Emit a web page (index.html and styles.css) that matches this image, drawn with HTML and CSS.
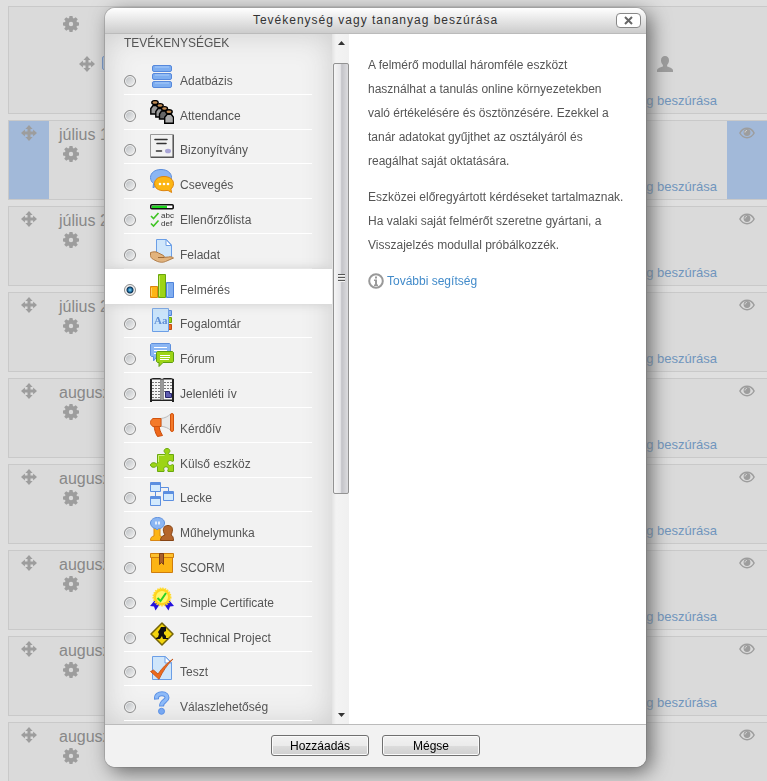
FILE: index.html
```html
<!DOCTYPE html>
<html lang="hu">

<head>
    <meta charset="UTF-8">
    <meta name="viewport" content="width=device-width, initial-scale=1.0">
    <title>Tevékenység vagy tananyag beszúrása</title>
    <link rel="stylesheet" href="styles.css">
</head>

<body>
    <!-- shared icons of the course page -->
    <svg class="sprite" aria-hidden="true">
        <symbol id="move" viewBox="0 0 16 16">
            <path d="M8 0l3.600 3.900H9.500v2.600h2.600V4.400L16 8l-3.900 3.600V9.500H9.500v2.600h2.100L8 16l-3.600-3.900h2.100V9.500H3.900v2.100L0 8l3.900-3.600v2.100h2.600V3.900H4.400z" />
        </symbol>
        <symbol id="gear" viewBox="0 0 16 16">
            <path fill-rule="evenodd" d="M6.500 0h3l.4 2.100 1 .4L12.700 1.200l2.100 2.100-1.300 1.800.4 1 2.100.4v3l-2.100.4-.4 1 1.300 1.800-2.100 2.100-1.800-1.300-1 .4-.4 2.100h-3l-.4-2.100-1-.4-1.800 1.300-2.100-2.100 1.300-1.800-.4-1L0 9.500v-3l2.100-.4.4-1-1.300-1.800 2.100-2.100 1.800 1.300 1-.4zM8 5.800a2.200 2.200 0 1 0 0 4.400 2.200 2.200 0 0 0 0-4.400z" />
        </symbol>
        <symbol id="eye" viewBox="0 0 16 16">
            <path fill="none" stroke="#9d9d9d" stroke-width="1.500" d="M.9 8C2.500 5 5 3.300 8 3.300S13.500 5 15.100 8C13.500 11 11 12.700 8 12.700S2.500 11 .9 8z" />
            <circle cx="8" cy="7.500" r="3.400" />
            <path fill="none" stroke="#dadada" d="M6 7.500c0-1.200.8-2 2-2" />
        </symbol>
        <symbol id="user" viewBox="0 0 16 16">
            <path d="M8 0c2.500 0 4 1.700 4 4.300 0 2-.8 3.600-1.900 4.600v1.500c2.500 1 5.900 1.700 5.900 4V16H0v-1.600c0-2.300 3.400-3 5.900-4V8.900C4.800 7.900 4 6.300 4 4.300 4 1.700 5.500 0 8 0z" />
        </symbol>
    </svg>

    <ul class="course">
        <li class="section intro">
            <div class="side"></div>
            <div class="content">
                <svg class="icon gear"><use href="#gear" /></svg>
                <div class="mod">
                    <svg class="icon"><use href="#move" /></svg>
                    <span class="mod-icon"></span>
                    <svg class="icon user"><use href="#user" /></svg>
                </div>
                <a class="add" href="#">Tevékenység vagy tananyag beszúrása</a>
            </div>
            <div class="side"></div>
        </li>
        <li class="section current">
            <div class="side"><svg class="icon"><use href="#move" /></svg></div>
            <div class="content">
                <h3>július 15</h3>
                <svg class="icon gear"><use href="#gear" /></svg>
                <a class="add" href="#">Tevékenység vagy tananyag beszúrása</a>
            </div>
            <div class="side"><svg class="icon"><use href="#eye" /></svg></div>
        </li>
        <li class="section">
            <div class="side"><svg class="icon"><use href="#move" /></svg></div>
            <div class="content">
                <h3>július 22</h3>
                <svg class="icon gear"><use href="#gear" /></svg>
                <a class="add" href="#">Tevékenység vagy tananyag beszúrása</a>
            </div>
            <div class="side"><svg class="icon"><use href="#eye" /></svg></div>
        </li>
        <li class="section">
            <div class="side"><svg class="icon"><use href="#move" /></svg></div>
            <div class="content">
                <h3>július 29</h3>
                <svg class="icon gear"><use href="#gear" /></svg>
                <a class="add" href="#">Tevékenység vagy tananyag beszúrása</a>
            </div>
            <div class="side"><svg class="icon"><use href="#eye" /></svg></div>
        </li>
        <li class="section">
            <div class="side"><svg class="icon"><use href="#move" /></svg></div>
            <div class="content">
                <h3>augusztus 5</h3>
                <svg class="icon gear"><use href="#gear" /></svg>
                <a class="add" href="#">Tevékenység vagy tananyag beszúrása</a>
            </div>
            <div class="side"><svg class="icon"><use href="#eye" /></svg></div>
        </li>
        <li class="section">
            <div class="side"><svg class="icon"><use href="#move" /></svg></div>
            <div class="content">
                <h3>augusztus 12</h3>
                <svg class="icon gear"><use href="#gear" /></svg>
                <a class="add" href="#">Tevékenység vagy tananyag beszúrása</a>
            </div>
            <div class="side"><svg class="icon"><use href="#eye" /></svg></div>
        </li>
        <li class="section">
            <div class="side"><svg class="icon"><use href="#move" /></svg></div>
            <div class="content">
                <h3>augusztus 19</h3>
                <svg class="icon gear"><use href="#gear" /></svg>
                <a class="add" href="#">Tevékenység vagy tananyag beszúrása</a>
            </div>
            <div class="side"><svg class="icon"><use href="#eye" /></svg></div>
        </li>
        <li class="section">
            <div class="side"><svg class="icon"><use href="#move" /></svg></div>
            <div class="content">
                <h3>augusztus 26</h3>
                <svg class="icon gear"><use href="#gear" /></svg>
                <a class="add" href="#">Tevékenység vagy tananyag beszúrása</a>
            </div>
            <div class="side"><svg class="icon"><use href="#eye" /></svg></div>
        </li>
        <li class="section">
            <div class="side"><svg class="icon"><use href="#move" /></svg></div>
            <div class="content">
                <h3>augusztus 31</h3>
                <svg class="icon gear"><use href="#gear" /></svg>
            </div>
            <div class="side"><svg class="icon"><use href="#eye" /></svg></div>
        </li>
    </ul>

    <div class="overlay">
        <form class="dialog" role="dialog" aria-labelledby="dialog-title">
            <div class="header">
                <h1 id="dialog-title">Tevékenység vagy tananyag beszúrása</h1>
                <button type="button" class="close" aria-label="Bezárás">
                    <svg viewBox="0 0 9 9"><path d="M1 1l7 7M8 1l-7 7" /></svg>
                </button>
            </div>

            <div class="main">
                <div class="chooser">
                    <h2>TEVÉKENYSÉGEK</h2>
                    <ul class="options">
                        <li><label>
                            <input type="radio" name="mod">
                            <svg viewBox="0 0 24 24" fill="#7eaef0" stroke="#5688dc">
                                <rect x="2.500" y=".5" width="19" height="6" rx="1.500" />
                                <rect x="2.500" y="8.500" width="19" height="6" rx="1.500" />
                                <rect x="2.500" y="16.500" width="19" height="6" rx="1.500" />
                                <path stroke="#a9ccfa" d="M5 2h14M5 10h14M5 18h14" />
                            </svg>
                            <span>Adatbázis</span>
                        </label></li>
                        <li><label>
                            <input type="radio" name="mod">
                            <svg viewBox="0 0 24 24" stroke="#000" stroke-width="1.400">
                                <g id="pupil"><path fill="#999" d="M.8 14V8.500L3 5.500h4.500l2 3V14z" /><ellipse cx="5" cy="2.500" rx="3.200" ry="1.900" fill="#c48d54" /></g>
                                <use href="#pupil" x="5" y="3" />
                                <g fill="#666"><path d="M9.500 19v-5l2-3H16l2 3v5z" /><ellipse cx="14.500" cy="8.500" rx="3" ry="1.900" fill="#c48d54" /></g>
                                <path fill="#aaa" d="M14.700 23.300v-6l2.500-3h4l2.300 3v6z" />
                                <ellipse cx="19" cy="11.700" rx="3.200" ry="1.900" fill="#c48d54" />
                            </svg>
                            <span>Attendance</span>
                        </label></li>
                        <li><label>
                            <input type="radio" name="mod">
                            <svg viewBox="0 0 24 24">
                                <path fill="#f2f2f2" stroke="#999" d="M.5.500h23v23H.5z" />
                                <path fill="none" stroke="#555" stroke-width="1.500" d="M1 23.200h22.200V1" />
                                <path stroke="#333" stroke-width="1.600" stroke-linecap="round" d="M5 5.500h12M7 9.500h9M6.500 17h5" />
                                <ellipse cx="18" cy="17" rx="3" ry="2.300" fill="#a9a5d6" />
                            </svg>
                            <span>Bizonyítvány</span>
                        </label></li>
                        <li><label>
                            <input type="radio" name="mod">
                            <svg viewBox="0 0 24 24">
                                <path fill="#8bb6f3" stroke="#5d8fdc" d="M11 .5c6 0 10.500 3.200 10.500 8S17 16.500 11 16.500l-4 .2-4 2 .6-4.300C1.500 13 .5 11 .5 8.500c0-4.800 4.500-8 10.500-8z" />
                                <path fill="#fcb614" stroke="#dd8410" d="M14 7.500c5.500 0 9.500 2.800 9.500 7.200 0 2.300-1 4-2.600 5.200l.7 3.600-3.600-2.100-4 .3c-5.500 0-9.500-2.600-9.500-7s4-7.200 9.500-7.200z" />
                                <g fill="#fff"><circle cx="10" cy="15" r="1.300" /><circle cx="14" cy="15" r="1.300" /><circle cx="18" cy="15" r="1.300" /></g>
                            </svg>
                            <span>Csevegés</span>
                        </label></li>
                        <li><label>
                            <input type="radio" name="mod">
                            <svg viewBox="0 0 24 24">
                                <rect x=".8" y=".8" width="22.400" height="4" rx="1" fill="#fff" stroke="#111" stroke-width="1.600" />
                                <path fill="#1dd81d" d="M2 1.700h15v2.200H2z" />
                                <path fill="none" stroke="#3fc424" stroke-width="1.600" d="M1 12l2.500 2.500L8.500 9M1 19.500L3.500 22l5-5.500" />
                                <text x="11" y="14">abc</text>
                                <text x="11" y="22">def</text>
                            </svg>
                            <span>Ellenőrzőlista</span>
                        </label></li>
                        <li><label>
                            <input type="radio" name="mod">
                            <svg viewBox="0 0 24 24">
                                <path fill="#cfe6fb" stroke="#6b9ee6" d="M6.500.500h10l5 5.500v13h-15z" />
                                <path fill="#fff" stroke="#6b9ee6" d="M16 .5V6.500h5.500z" />
                                <path fill="#e2b37c" stroke="#b07a43" d="M.5 13.500c3-1 6-1 8 .5l5 2.500c1.500 1 .5 2-1 2l6-.5c2-.5 4 0 5 1l-8 3.500c-2 1-5 1-8 0l-4-2c-2-1-3-2.500-3-4z" />
                                <path stroke="#9c6937" fill="none" d="M8 18.500h6" />
                            </svg>
                            <span>Feladat</span>
                        </label></li>
                        <li class="selected"><label>
                            <input type="radio" name="mod" checked>
                            <svg viewBox="0 0 24 24">
                                <path fill="#fdb515" stroke="#db8411" d="M.5 12.500h7v11h-7z" />
                                <path fill="#7fadf0" stroke="#4f83da" d="M16.500 8.500h7v15h-7z" />
                                <path fill="#9dd416" stroke="#6aa50c" d="M8.500.500h7v23h-7z" />
                                <path stroke="#c5ec62" d="M9.500 2v20" /><path stroke="#b0d0fb" d="M17.500 10v12" /><path stroke="#fed364" d="M1.500 14v8" />
                            </svg>
                            <span>Felmérés</span>
                        </label></li>
                        <li><label>
                            <input type="radio" name="mod">
                            <svg viewBox="0 0 24 24">
                                <path fill="#8bb6f3" stroke="#4f83da" d="M17.500 2.500h4v5h-4z" />
                                <path fill="#9dd416" stroke="#6aa50c" d="M17.500 9.500h4v5h-4z" />
                                <path fill="#ee6a1c" stroke="#c14d0e" d="M17.500 16.500h4v5h-4z" />
                                <path fill="#c9e4fb" stroke="#6b9ee6" d="M2.500.500h16v23h-16z" />
                                <text class="serif" x="4" y="16">Aa</text>
                            </svg>
                            <span>Fogalomtár</span>
                        </label></li>
                        <li><label>
                            <input type="radio" name="mod">
                            <svg viewBox="0 0 24 24">
                                <path fill="#8bb6f3" stroke="#5d8fdc" d="M1.500.500h18l1 1v11l-1 1H7L3.500 18v-4.500h-2l-1-1v-11z" />
                                <path stroke="#fff" d="M4 4.500h13M4 7.500h13M4 10.500h3" />
                                <path fill="#9dd416" stroke="#5d9d10" d="M7.500 8.500h15l1 1v9l-1 1H13L9 23.500v-4H7.500l-1-1v-9z" />
                                <path stroke="#fff" d="M10 12.500h10M10 14.500h10M10 16.500h9" />
                            </svg>
                            <span>Fórum</span>
                        </label></li>
                        <li><label>
                            <input type="radio" name="mod">
                            <svg viewBox="0 0 24 24">
                                <path fill="#222" d="M0 1l3-1h7l2 1 2-1h7l3 1v23h-2v-1H2v1H0z" />
                                <path fill="#f5f5f5" d="M2 1.500h8.500v20H2zM13.500 1.500H22v20h-8.500z" />
                                <path fill="#999" d="M10.500 1.500h3V22h-3z" />
                                <path stroke="#777" stroke-width="1.200" stroke-dasharray="2 1" d="M2 4.500h8M2 7.500h8M2 10.500h8M2 13.500h8M2 16.500h8M2 19.500h8M14 4.500h8M14 7.500h8M14 10.500h8M14 13.500h4" />
                                <path fill="#5d5bb0" stroke="#27256a" d="M15.500 13.500h4v2h2v4h-6z" />
                            </svg>
                            <span>Jelenléti ív</span>
                        </label></li>
                        <li><label>
                            <input type="radio" name="mod">
                            <svg viewBox="0 0 24 24">
                                <path fill="#ef6719" stroke="#c94d0c" d="M4 12.500h5.500c-.7 3 1 6.500 3 10l-5 1c-2-3-3-6.500-3.500-11z" />
                                <path fill="#e9e9e9" stroke="#bbb" d="M11 5.500C15 5 18 3.500 20.500 1v16c-2.500-2-5.500-3.300-9.500-3.800z" />
                                <path fill="#f47a2a" stroke="#d2530e" d="M3 5.500h8v8H3c-1.500-1-2.500-2-2.500-4s1-3 2.500-4z" />
                                <rect x="20.500" y=".5" width="3" height="18" rx="1.500" fill="#f47a2a" stroke="#d2530e" />
                            </svg>
                            <span>Kérdőív</span>
                        </label></li>
                        <li><label>
                            <input type="radio" name="mod">
                            <svg viewBox="0 0 24 24">
                                <path fill="#9dd416" stroke="#69a80e" d="M7.500 6.500H15c1-1 0-1.500-.8-2.800C13.700 2 15 .5 17 .5s3.300 1.500 2.800 3.200C19 5 18 5.500 19 6.500h4.500V13c-1 1-1.500 0-2.800-.4-1.700-.4-3 .7-3 2.400s1.300 2.800 3 2.400c1.300-.4 1.800-1.400 2.800-.4v6.500H18c-.8-1 .3-1.500.3-2.700 0-1.300-1-2-2.300-2s-2.300.7-2.300 2c0 1.200 1 1.700.3 2.700H7.500v-5c-1-1-1.500.2-2.800.7C2.500 19.700.5 18.500.5 17s2-2.700 4.200-2.200c1.300.4 1.800 1.600 2.800.6z" />
                                <path fill="none" stroke="#cdf073" d="M8.500 14V7.500h6" />
                            </svg>
                            <span>Külső eszköz</span>
                        </label></li>
                        <li><label>
                            <input type="radio" name="mod">
                            <svg viewBox="0 0 24 24" fill="#d3eafd" stroke="#5c8fe0">
                                <path fill="none" d="M11 5.500h7.500V9M5.500 9v5" />
                                <path d="M.5.500h10v9H.5zM.5 14.500h10v9H.5zM13.500 9.500h10v9h-10z" />
                                <path stroke-width="2" d="M1 2h9M1 16h9M14 11h9" />
                            </svg>
                            <span>Lecke</span>
                        </label></li>
                        <li><label>
                            <input type="radio" name="mod">
                            <svg viewBox="0 0 24 24">
                                <path fill="#fdb515" stroke="#d98613" d="M.5 23.500c0-3 1-4 3.500-4.500V9h6v10c2.500.5 3.500 1.500 3.500 4.500z" />
                                <path fill="#b5652b" stroke="#864414" d="M10.500 23.500c0-3 1.500-4.500 4.500-5.500-3-5-2-9.500 3-9.500s5.500 4.500 3 9.500c1.500.5 2.500 2 2.500 5.500z" />
                                <path fill="#8bb6f3" stroke="#5d8fdc" d="M7.500.5c4 0 7 2.300 7 5.500s-3 5.700-6 5.700L7 13l-1-1.300C3 11.300.5 9 .5 6s3-5.500 7-5.500z" />
                                <path stroke="#fff" stroke-width="1.500" d="M6 4.500v3M9 4.500v3" />
                            </svg>
                            <span>Műhelymunka</span>
                        </label></li>
                        <li><label>
                            <input type="radio" name="mod">
                            <svg viewBox="0 0 24 24">
                                <path fill="#fcb414" stroke="#cf7d0d" d="M1.500 5.500h21v15h-21z" />
                                <path fill="#fdc02c" stroke="#cf7d0d" d="M.5 1.500h23v4H.5z" />
                                <path fill="#a9602b" stroke="#7c3f15" d="M9.500 1.500h4v11l-2-2-2 2z" />
                            </svg>
                            <span>SCORM</span>
                        </label></li>
                        <li><label>
                            <input type="radio" name="mod">
                            <svg viewBox="0 0 24 24">
                                <path fill="#2412dd" d="M5 13l-5 6 4 .5 1.500 4L10 17zM19 13l5 6-4 .5-1.500 4L14 17z" />
                                <circle cx="12" cy="10" r="8.500" fill="#ffd21c" stroke="#ffdc2e" stroke-width="2" stroke-dasharray="1.500 1" />
                                <circle cx="12" cy="10" r="6" fill="#fff66a" />
                                <path fill="none" stroke="#2ad022" stroke-width="2" d="M7.500 11l3 3 5.500-8" />
                            </svg>
                            <span>Simple Certificate</span>
                        </label></li>
                        <li><label>
                            <input type="radio" name="mod">
                            <svg viewBox="0 0 24 24">
                                <path fill="#f3d50d" stroke="#74640a" stroke-width="1.500" stroke-linejoin="round" d="M12 1l11 11-11 11L1 12z" />
                                <path fill="#111" d="M11 5h5v4l-2 1v2l2 2v2h2v1h-5l-1-3-2 3H6v-1l2-1 1-3-1-2 2-3z" />
                            </svg>
                            <span>Technical Project</span>
                        </label></li>
                        <li><label>
                            <input type="radio" name="mod">
                            <svg viewBox="0 0 24 24">
                                <path fill="#cfe6fb" stroke="#6b9ee6" d="M2.500.500h13l6 6v17h-19z" />
                                <path fill="#fff" stroke="#6b9ee6" d="M15 .5V7h6.500z" />
                                <path fill="#ee6a1c" stroke="#bf4c10" stroke-width=".8" d="M.5 15.500l3-1.500 4.500 4C12 12 17 7 23 3c-6 6-10 12-14 20.300z" />
                            </svg>
                            <span>Teszt</span>
                        </label></li>
                        <li><label>
                            <input type="radio" name="mod">
                            <svg viewBox="0 0 24 24">
                                <path fill="none" stroke="#5b90e4" stroke-width="5" d="M6.500 8.500C6 4 9 2.800 12 2.800c3.500 0 5 2 5 4C17 10 11.500 10 11.500 15.500" />
                                <path fill="none" stroke="#8dbaf8" stroke-width="3" d="M6.500 7.500C6.300 4 9 2.800 12 2.800c3.500 0 5 2 5 4C17 10 11.500 10 11.500 14.500" />
                                <circle cx="11.500" cy="20.300" r="3" fill="#77a8f2" stroke="#5b90e4" />
                            </svg>
                            <span>Válaszlehetőség</span>
                        </label></li>
                    </ul>
                </div>

                <div class="scrollbar">
                    <svg viewBox="0 0 7 4"><path d="M0 4l3.500-4L7 4z" /></svg>
                    <div class="track">
                        <div class="thumb"><i></i></div>
                    </div>
                    <svg viewBox="0 0 7 4"><path d="M0 0l3.500 4L7 0z" /></svg>
                </div>

                <div class="help">
                    <p>A felmérő modullal háromféle eszközt használhat a tanulás online környezetekben való értékelésére és ösztönzésére. Ezekkel a tanár adatokat gyűjthet az osztályáról és reagálhat saját oktatására.</p>
                    <p>Eszközei előregyártott kérdéseket tartalmaznak. Ha valaki saját felmérőt szeretne gyártani, a Visszajelzés modullal próbálkozzék.</p>
                    <p class="more">
                        <svg viewBox="0 0 16 16">
                            <circle cx="8" cy="8" r="6.800" fill="none" stroke="#999" stroke-width="2" />
                            <path fill="#999" d="M7 3.500h2v2H7zM6 6.500h3v5h1V13H6v-1.500h1V8H6z" />
                        </svg>
                        <a href="#">További segítség</a>
                    </p>
                </div>
            </div>

            <div class="footer">
                <button type="submit">Hozzáadás</button>
                <button type="button">Mégse</button>
            </div>
        </form>
    </div>
</body>

</html>
```

FILE: styles.css
```css
* {
    margin: 0;
    padding: 0;
    box-sizing: border-box;
    list-style: none;
}

html,
body {
    height: 100%;
}

body {
    overflow: hidden;
    background-color: #dfdfdf;
    font-family: "Liberation Sans", Arial, sans-serif;
    font-size: 13px;
    color: #555;
}

a {
    text-decoration: none;
}

.sprite {
    display: none;
}

/* course page */
.course {
    display: flex;
    flex-direction: column;
    gap: 6px;
    padding: 6px 0 0 8px;
}

.section {
    display: flex;
    flex-shrink: 0;
    min-height: 80px;
    background-color: #dadada;
    border: 1px solid #c9c9c9;
    border-right: 0;
}

.side {
    width: 40px;
    padding-top: 4px;
    text-align: center;
}

.current .side {
    background-color: #a2b9d9;
}

.icon {
    display: block;
    width: 16px;
    height: 16px;
    margin: 0 auto;
    fill: #9d9d9d;
}

.content {
    flex: 1;
    display: flex;
    flex-direction: column;
    padding: 4px 10px 2px;
}

.content h3 {
    font-size: 16px;
    font-weight: normal;
    line-height: 20px;
    color: #888;
}

.content .gear {
    margin: 1px 4px;
}

.add {
    margin-top: auto;
    text-align: right;
    line-height: 20px;
    color: #7095bd;
}

.intro {
    min-height: 108px;
}

.intro .content {
    padding-top: 8px;
}

.mod {
    display: flex;
    gap: 7px;
    padding: 23px 44px 0 20px;
}

.mod .icon {
    margin: 0;
}

.mod .user {
    margin-left: auto;
}

.mod-icon {
    width: 14px;
    height: 14px;
    background-color: #b5c7de;
    border: 1px solid #7397cd;
    border-radius: 2px;
}

/* dialog */
.overlay {
    position: fixed;
    inset: 0;
    display: flex;
    justify-content: center;
    padding: 8px 16px 14px 0;
}

.dialog {
    display: flex;
    flex-direction: column;
    width: 100%;
    max-width: 541px;
    overflow: hidden;
    background-color: #fff;
    border-radius: 10px;
    box-shadow: 5px 5px 20px #666, 0 0 0 1px #bbb;
    font-size: 12px;
}

.header {
    position: relative;
    height: 26px;
    background: linear-gradient(#fff, #ccc);
    border-bottom: 1px solid #bbb;
}

.header h1 {
    font-size: 12px;
    font-weight: normal;
    line-height: 24px;
    letter-spacing: 1px;
    text-align: center;
    color: #333;
}

.close {
    position: absolute;
    top: 5px;
    right: 5px;
    display: flex;
    align-items: center;
    justify-content: center;
    width: 25px;
    height: 15px;
    background-color: #fff;
    border: 1px solid #888;
    border-radius: 4px;
}

.close svg {
    width: 9px;
    height: 9px;
    stroke: #666;
    stroke-width: 2;
}

.main {
    flex: 1;
    display: flex;
    min-height: 0;
}

.chooser {
    display: flex;
    flex-direction: column;
    width: 227px;
    padding-bottom: 3px;
    overflow: hidden;
    background-color: #f2f2f2;
    box-shadow: inset 0 0 30px #ccc;
}

.chooser h2 {
    padding-left: 19px;
    margin-bottom: 8px;
    font-size: 12px;
    font-weight: normal;
    line-height: 18px;
}

.options {
    flex: 1;
    display: flex;
    flex-direction: column;
}

.options li {
    flex: 1;
    display: flex;
    padding: 0 20px 0 19px;
}

.options label {
    flex: 1;
    display: flex;
    align-items: flex-end;
    height: 100%;
    padding-bottom: 5px;
    border-bottom: 1px solid #fff;
}

.options .selected {
    position: relative;
    background-color: #fff;
    box-shadow: 0 0 10px #ccc;
}

.options input {
    appearance: none;
    width: 12px;
    height: 12px;
    margin: 0 14px 2px 0;
    background: linear-gradient(135deg, #b8bcc0, #f4f4f4);
    border: 1px solid #8a8a8a;
    border-radius: 50%;
    box-shadow: inset 0 0 0 1px #f4f4f4;
}

.options input:checked {
    background: radial-gradient(circle at 5px 5px, #8fe0fa 0, #1d6fa5 2px, #0c2f50 3px, #e8e8e8 4px);
}

.options svg {
    width: 24px;
    height: 24px;
    margin-right: 6px;
}

.options text {
    font-size: 8px;
    fill: #333;
}

.options .serif {
    font-family: "Liberation Serif", serif;
    font-size: 11px;
    font-weight: bold;
    fill: #5f8fd6;
}

.options span {
    line-height: 16px;
}

.scrollbar {
    display: flex;
    flex-direction: column;
    align-items: center;
    width: 17px;
    padding: 7px 0 7px 1px;
    background: linear-gradient(to right, #e3e3e3, #f3f3f3 4px, #f0f0f0);
}

.scrollbar svg {
    width: 7px;
    height: 4px;
    fill: #333;
}

.track {
    flex: 1;
    width: 100%;
    padding: 18px 0 7px;
}

.thumb {
    display: flex;
    align-items: center;
    justify-content: center;
    height: 67%;
    background: linear-gradient(to right, #f5f5f5, #e6e6e9 45%, #c3c3c8 55%, #dcdcdf);
    border: 1px solid #929292;
    border-radius: 2px;
}

.thumb i {
    width: 7px;
    height: 8px;
    background: repeating-linear-gradient(#555 0, #555 1px, #fff 1px, #ccc 3px);
}

.help {
    flex: 1;
    padding: 19px 21px 19px 19px;
}

.help p {
    margin-bottom: 12px;
    line-height: 24px;
}

.help .more {
    display: flex;
    align-items: center;
    gap: 3px;
}

.more svg {
    width: 16px;
    height: 16px;
}

.more a {
    color: #428bca;
}

.footer {
    display: flex;
    justify-content: center;
    gap: 13px;
    height: 43px;
    padding-top: 10px;
    background-color: #f2f2f2;
    border-top: 1px solid #bbb;
}

.footer button {
    width: 98px;
    height: 21px;
    font-family: inherit;
    font-size: 12px;
    color: #000;
    background: linear-gradient(#f2f2f2, #ebebeb 50%, #ddd 50%, #cfcfcf);
    border: 1px solid #707070;
    border-radius: 3px;
    box-shadow: inset 0 0 0 1px #fafafa;
}
```
